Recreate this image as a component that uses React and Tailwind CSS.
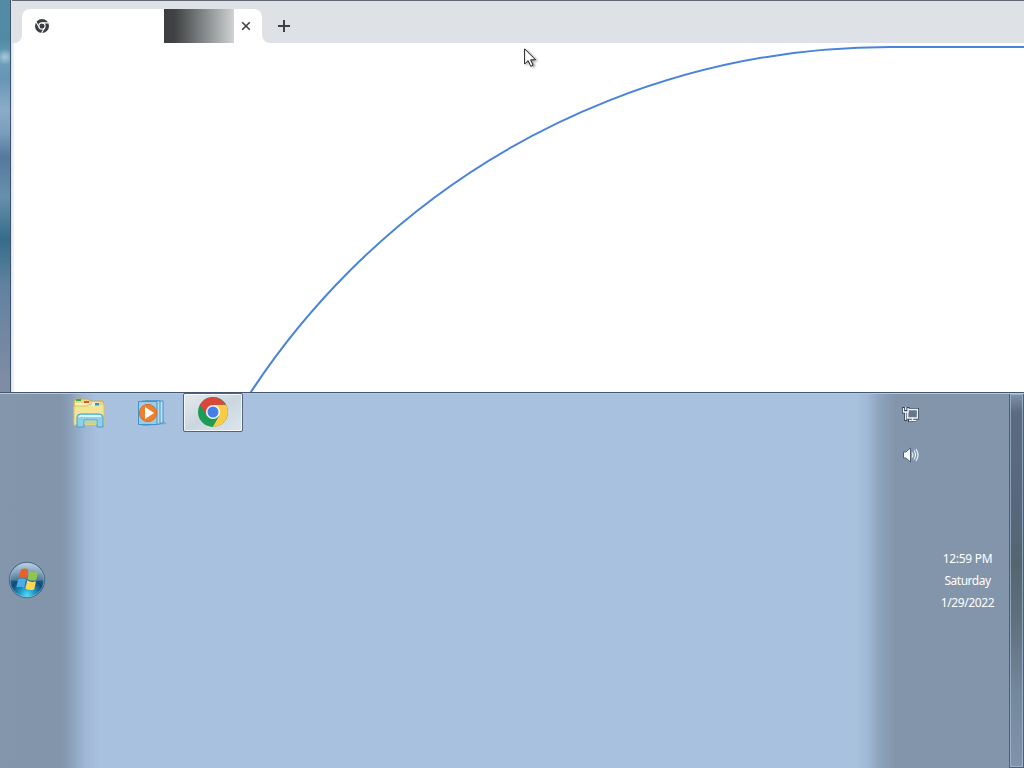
import React from "react";

function ChromeLogo({ className }) {
  return (
    <svg className={className} viewBox="0 0 30 30">
      <circle cx="15" cy="15" r="15" fill="#1e9b55" />
      <path d="M15 7.8H28.1A15 15 0 0 1 14.8 30L21.3 18.5Z" fill="#fccb45" />
      <path d="M2 7.5A15 15 0 0 1 28 7.8H15L8.7 18.6Z" fill="#dc4638" />
      <circle cx="15" cy="15" r="7.1" fill="#f3f6fa" />
      <circle cx="15" cy="15" r="5.5" fill="#477ee8" />
    </svg>
  );
}

function ChromeMono() {
  return (
    <svg className="w-[14px] h-[14px]" viewBox="0 0 14 14" fill="none">
      <circle cx="7" cy="7" r="7" fill="#3b3f43" />
      <circle cx="7" cy="7" r="3.1" stroke="#fff" strokeWidth="1.1" />
      <path d="M7 3.9H13.4M4.3 8.5L1.1 3M9.7 8.5L6.5 14" stroke="#fff" strokeWidth="1.1" />
    </svg>
  );
}

function TabStrip() {
  return (
    <div className="h-[43px] shrink-0 bg-[#dee1e6] border-t border-[#626872] flex items-end">
      <div className="w-[10px] h-[34px] bg-white">
        <div className="w-full h-full bg-[#dee1e6] rounded-br-lg"></div>
      </div>
      <div className="w-[240px] h-[34px] bg-white rounded-tr-lg flex items-center">
        <div className="w-3 h-full bg-[#dee1e6]">
          <div className="w-full h-full bg-white rounded-tl-lg"></div>
        </div>
        <div className="ml-px">
          <ChromeMono />
        </div>
        <div className="ml-[115px] w-[70px] h-full bg-[linear-gradient(90deg,#3b3d3e_0%,#404243_15%,#7b7f81_52%,#b5b8b9_85%,#d0d2d3_100%)]"></div>
        <svg className="ml-[7px] w-[10px] h-[10px]" viewBox="0 0 10 10">
          <path d="M1.2 1.2L8.8 8.8M8.8 1.2L1.2 8.8" stroke="#3c4043" strokeWidth="1.6" />
        </svg>
      </div>
      <div className="w-2 h-[34px] bg-white">
        <div className="w-full h-full bg-[#dee1e6] rounded-bl-lg"></div>
      </div>
      <div className="h-[34px] flex items-center pl-2">
        <svg className="w-[12px] h-[12px]" viewBox="0 0 12 12">
          <path d="M6 0V12M0 6H12" stroke="#3c4043" strokeWidth="2" />
        </svg>
      </div>
    </div>
  );
}

function Cursor() {
  return (
    <svg
      className="absolute left-[524px] top-[48px] w-[14px] h-[21px] drop-shadow-[2px_1px_1px_rgba(0,0,0,0.35)]"
      viewBox="0 0 14 21"
    >
      <path
        d="M.6 .8V16L4.2 12.6L6.7 18.3L9.1 17.2L6.6 11.8H11.5Z"
        fill="#fff"
        stroke="#222"
        strokeWidth="1"
      />
    </svg>
  );
}

function Browser() {
  return (
    <div className="flex h-[392px]">
      <div className="w-[10px] bg-[radial-gradient(circle_8px_at_5px_57px,#a9c8d9,transparent),linear-gradient(180deg,#548aa5_0%,#4f8ba3_10%,#6c9fba_15%,#6795b5_20%,#8aadc7_28%,#7a9dbc_34%,#53799b_40%,#6790ac_50%,#356d89_61%,#60839f_73%,#7287a1_85%,#828da4_100%)]"></div>
      <div className="w-[2px] shrink-0 bg-[#3d536e] border-r border-[#dce1e6]"></div>
      <div className="flex-1 min-w-0 flex flex-col bg-white">
        <TabStrip />
        <div className="flex-1 border-l-2 border-[#edf0f2]">
          <svg className="w-[1010px] h-[349px]" viewBox="14 43 1010 349" fill="none">
            <path d="M126 811A764 764 0 0 1 890 47H1024" stroke="#4a83da" strokeWidth="2" />
          </svg>
        </div>
      </div>
    </div>
  );
}

function StartOrb() {
  return (
    <svg className="w-[38px] h-[38px] mb-[2px]" viewBox="0 0 38 38">
      <defs>
        <radialGradient id="orb" cx="50%" cy="92%" r="78%">
          <stop offset="0" stopColor="#4ddcf5" />
          <stop offset=".3" stopColor="#1e92c2" />
          <stop offset=".6" stopColor="#0f4a78" />
          <stop offset="1" stopColor="#557f9e" />
        </radialGradient>
        <linearGradient id="gloss" x2="0" y2="1">
          <stop stopColor="#d4e2ed" stopOpacity=".8" />
          <stop offset="1" stopColor="#83a9c4" stopOpacity=".4" />
        </linearGradient>
      </defs>
      <circle cx="19" cy="19" r="17.7" fill="url(#orb)" stroke="#2e546f" strokeWidth=".8" />
      <path d="M2 19A17 17 0 0 1 36 19Q19 22 2 19Z" fill="url(#gloss)" />
      <path d="M13 8.6Q16.5 6.6 20.2 8.6L18.4 17.4Q14.5 15.4 10.3 17.2Z" fill="#e8602b" />
      <path d="M21.3 9.8Q25 12.3 30 10.8L28.3 19Q23.8 20.5 19.6 18.2Z" fill="#91c64d" />
      <path d="M10 18.6Q14 16.6 18 18.7L16.2 26.8Q12.4 24.7 8.4 26.6Z" fill="#4caee8" />
      <path d="M19.2 19.5Q23.2 21.9 28 20.3L26.2 28.5Q21.7 30 17.4 27.7Z" fill="#fed654" />
      <circle cx="19" cy="19" r="17" fill="none" stroke="#b8d8e9" strokeOpacity=".45" />
    </svg>
  );
}

function ExplorerIcon() {
  return (
    <svg className="w-[34px] h-[30px]" viewBox="0 0 34 30">
      <path d="M2 3L4 1H16L18 3H31V27H2Z" fill="#f0d77b" stroke="#c6ad59" />
      <path d="M3 5H31V9H3Z" fill="#fff4b5" />
      <path d="M4 2H9" stroke="#38a957" strokeWidth="2" />
      <path d="M12 4H17" stroke="#d85435" strokeWidth="2" />
      <path d="M2 8H15L18 6H32V27H2Z" fill="#f2e596" stroke="#d6c166" />
      <path d="M20 4.5H27V7.5H20Z" fill="#e4f3f8" />
      <path d="M23 5H27V7.5H23Z" fill="#438ac9" />
      <path d="M5 29V19Q5 16 9 16H27Q31 16 31 19V29H25V22H12V29Z" fill="#8bd0ed" stroke="#4a9ecb" />
      <path d="M7 19Q8 17.5 11 18H29" fill="none" stroke="#d9f5fc" strokeWidth="2" />
      <path d="M12.5 22.5H24.5V26H12.5Z" fill="#b8d4ac" />
    </svg>
  );
}

function MediaIcon() {
  return (
    <svg className="w-[30px] h-[28px]" viewBox="0 0 30 28">
      <path d="M8 26L30 24L25 20Z" fill="#5f91b5" fillOpacity=".5" />
      <path d="M8 1H26V23L8 25Z" fill="#c1e3f3" stroke="#4293c7" />
      <path d="M5 1H23V24L5 25Z" fill="#b5dbed" stroke="#4293c7" />
      <path d="M1.5 1.5H20V24.5H1.5Z" fill="#9ecbe3" stroke="#4293c7" />
      <circle cx="11" cy="13" r="8.6" fill="#ed8130" stroke="#d86d24" />
      <path d="M8 7L17 13L8 19Z" fill="#fff" />
    </svg>
  );
}

function NetworkIcon() {
  return (
    <svg className="w-[18px] h-[17px]" viewBox="0 0 18 17" fill="none">
      <path d="M1.5 1V6H6V1M3.7 1V15M6 3.5H15.5V12H5.5M6 14.5H14M10.5 12V15" stroke="#35465b" strokeWidth="3" />
      <path d="M6 3.5H15.5V12H5.5Z" fill="#65778c" stroke="#f4f7fa" strokeWidth="1.3" />
      <path d="M1.2 1V6H6.2V1Z" fill="#35465b" />
      <path d="M1.5 2V6H6V2M3.7 1V4M3.7 6V14M7 14.5H14M10.5 12V14" stroke="#f4f7fa" strokeWidth="1.3" />
    </svg>
  );
}

function VolumeIcon() {
  return (
    <svg className="w-[18px] h-[16px]" viewBox="0 0 18 16" fill="none">
      <path d="M1.5 5H4L8.5 1V15L4 11H1.5Z" fill="#fff" stroke="#4b5e75" />
      <path d="M10 5.5Q11.8 8 10 10.5M12 3.5Q15 8 12 12.5M14 2Q18 8 14 14" stroke="#edf3f8" strokeWidth="1.2" />
    </svg>
  );
}

function Taskbar() {
  return (
    <div className="relative h-[376px] flex border-t border-[#43566e] bg-[linear-gradient(90deg,#8496ac_0px,#8295ab_62px,#8a9fb8_70px,#9eb6d3_84px,#a8c1de_98px,#a8c1de_856px,#9fb8d3_868px,#8da3bc_880px,#8295ab_895px)]">
      <div className="absolute inset-x-0 top-0 h-px bg-[#b9c8dc]"></div>
      <div className="w-[72px] flex items-center pl-2">
        <StartOrb />
      </div>
      <div className="flex items-start">
        <div className="w-[65px] pt-[5px]">
          <ExplorerIcon />
        </div>
        <div className="w-[46px] pt-[7px]">
          <MediaIcon />
        </div>
        <div className="relative w-[60px] h-[39px] rounded-[2px] border border-[#53647a] bg-gradient-to-br from-[#e5ebef] via-[#cbd7e0] to-[#dce5ec] shadow-[inset_0_0_0_1px_rgba(255,255,255,0.75)] flex justify-center pt-[3px]">
          <ChromeLogo className="w-[30px] h-[30px]" />
        </div>
      </div>
      <div className="ml-auto flex">
        <div className="w-[36px] pt-[13px] flex flex-col gap-[24px]">
          <NetworkIcon />
          <VolumeIcon />
        </div>
        <div className="w-[71px] pr-[12px] flex flex-col justify-center text-center text-white font-['Noto_Sans','Open_Sans',sans-serif] text-[12px] leading-[22px] whitespace-nowrap">
          <span className="tracking-[-0.3px]">12:59 PM</span>
          <span className="tracking-[-0.5px]">Saturday</span>
          <span className="tracking-[-0.4px]">1/29/2022</span>
        </div>
        <div className="w-[15px] border border-[#4a5f78] bg-[linear-gradient(180deg,#8293a9_0px,#5b6b82_18px,#57687e_30%,#55656f_45%,#60717f_62%,#73879d_80%,#8093aa_100%)] shadow-[inset_0_0_0_1px_rgba(174,198,222,0.6)]"></div>
      </div>
    </div>
  );
}

export default function App() {
  return (
    <div className="relative w-[1024px] h-[768px] overflow-hidden bg-white">
      <Browser />
      <Taskbar />
      <Cursor />
    </div>
  );
}
